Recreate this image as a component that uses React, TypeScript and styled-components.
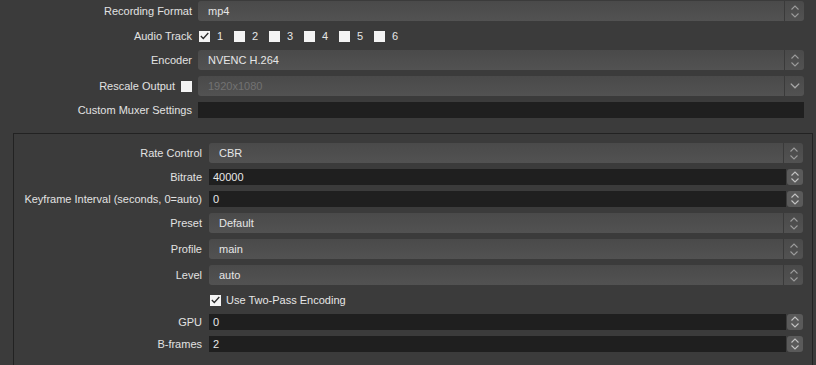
import React from "react";
import styled, { createGlobalStyle } from "styled-components";

const Global = createGlobalStyle`
  html, body { margin: 0; padding: 0; background: #3b3b3b; overflow: hidden; }
  body { font-family: "Liberation Sans", "Noto Sans", Arial, sans-serif; font-size: 11px; color: #e2e2e2; }
  *, *::before, *::after { box-sizing: border-box; }
`;

const Page = styled.div`
  width: 816px;
  height: 365px;
  padding-top: 1px;
  background: #3b3b3b;
`;

const FormGrid = styled.div<{ $label: number; $col: number }>`
  display: grid;
  grid-template-columns: ${(p) => p.$label}px 1fr;
  column-gap: ${(p) => p.$col}px;
  row-gap: 6px;
  align-items: center;
`;

const TopForm = styled(FormGrid)`
  padding-right: 12px;
`;

const Label = styled.div`
  display: flex;
  justify-content: flex-end;
  align-items: center;
  gap: 6px;
  white-space: nowrap;
  color: #e2e2e2;
  height: 16px;
  line-height: 15px;
  padding-top: 1px;
`;

const GroupBox = styled.div`
  margin: 15px 3px 0 13px;
  border: 1px solid #222222;
  border-bottom: none;
  padding: 9px 9px 20px 0;
`;

const ComboBox = styled.div<{ $disabled?: boolean }>`
  height: 20px;
  display: flex;
  border-radius: 3px;
  background: linear-gradient(to bottom, #4a4a4a, #525252);
  color: ${(p) => (p.$disabled ? "#727272" : "#e6e6e6")};
`;

const ComboText = styled.div`
  flex: 1;
  padding-left: 10px;
  padding-top: 1px;
  line-height: 19px;
`;

const DropButton = styled.div`
  width: 20px;
  border-left: 1px solid #3a3a3a;
  display: flex;
  flex-direction: column;
  align-items: center;
  justify-content: center;
  gap: 3px;
`;

const Chevron = ({ up, color = "#9c9c9c", w = 8 }: { up?: boolean; color?: string; w?: number }) => (
  <svg width={w} height={w / 2 + 1} viewBox="0 0 8 5" style={{ display: "block" }}>
    <polyline
      points={up ? "0.5,4.5 4,1 7.5,4.5" : "0.5,0.5 4,4 7.5,0.5"}
      fill="none"
      stroke={color}
      strokeWidth="1.1"
    />
  </svg>
);

const Combo = ({ value, single, disabled }: { value: string; single?: boolean; disabled?: boolean }) => (
  <ComboBox $disabled={disabled}>
    <ComboText>{value}</ComboText>
    <DropButton>
      {single ? (
        <Chevron w={10} color="#a8a8a8" />
      ) : (
        <>
          <Chevron up />
          <Chevron />
        </>
      )}
    </DropButton>
  </ComboBox>
);

const InputRow = styled.div`
  height: 16px;
  display: flex;
  gap: 1px;
`;

const TextField = styled.div`
  flex: 1;
  background: #1f1f1f;
  color: #e8e8e8;
  line-height: 15px;
  padding-left: 4px;
  padding-top: 1px;
`;

const SpinBox = styled.div`
  width: 16px;
  height: 16px;
  border-radius: 3px;
  background: #5a5a5a;
  display: flex;
  flex-direction: column;
  align-items: center;
  justify-content: center;
  gap: 2px;
`;

const SpinInput = ({ value }: { value: string }) => (
  <InputRow>
    <TextField>{value}</TextField>
    <SpinBox>
      <Chevron up color="#c4c4c4" />
      <Chevron color="#c4c4c4" />
    </SpinBox>
  </InputRow>
);

const Box = styled.span`
  width: 11px;
  height: 11px;
  background: #f4f4f4;
  display: inline-flex;
  align-items: center;
  justify-content: center;
  flex: none;
`;

const CheckBox = ({ checked }: { checked?: boolean }) => (
  <Box>
    {checked && (
      <svg width="9" height="8" viewBox="0 0 9 8">
        <polyline points="0.8,4 3.3,6.5 8.3,1" fill="none" stroke="#2b2b2b" strokeWidth="1.3" />
      </svg>
    )}
  </Box>
);

const Tracks = styled.div`
  height: 17px;
  display: flex;
  align-items: center;
  padding-left: 1px;
  padding-top: 1px;
`;

const Track = styled.label`
  width: 35px;
  display: flex;
  align-items: center;
  gap: 7px;
  color: #e6e6e6;
`;

const CheckRow = styled.div`
  height: 17px;
  display: flex;
  align-items: center;
  gap: 5px;
  padding-left: 1px;
  padding-top: 1px;
  color: #e6e6e6;
`;

const Spacer = styled.div``;

export default function App() {
  return (
    <Page>
      <Global />
      <TopForm $label={192} $col={6}>
        <Label>Recording Format</Label>
        <Combo value="mp4" />
        <Label>Audio Track</Label>
        <Tracks>
          {[1, 2, 3, 4, 5, 6].map((n) => (
            <Track key={n}>
              <CheckBox checked={n === 1} />
              {n}
            </Track>
          ))}
        </Tracks>
        <Label>Encoder</Label>
        <Combo value="NVENC H.264" />
        <Label>
          Rescale Output <CheckBox />
        </Label>
        <Combo value="1920x1080" single disabled />
        <Label>Custom Muxer Settings</Label>
        <InputRow>
          <TextField />
        </InputRow>
      </TopForm>
      <GroupBox>
        <FormGrid $label={188} $col={7}>
          <Label>Rate Control</Label>
          <Combo value="CBR" />
          <Label>Bitrate</Label>
          <SpinInput value="40000" />
          <Label>Keyframe Interval (seconds, 0=auto)</Label>
          <SpinInput value="0" />
          <Label>Preset</Label>
          <Combo value="Default" />
          <Label>Profile</Label>
          <Combo value="main" />
          <Label>Level</Label>
          <Combo value="auto" />
          <Spacer />
          <CheckRow>
            <CheckBox checked />
            Use Two-Pass Encoding
          </CheckRow>
          <Label>GPU</Label>
          <SpinInput value="0" />
          <Label>B-frames</Label>
          <SpinInput value="2" />
        </FormGrid>
      </GroupBox>
    </Page>
  );
}
